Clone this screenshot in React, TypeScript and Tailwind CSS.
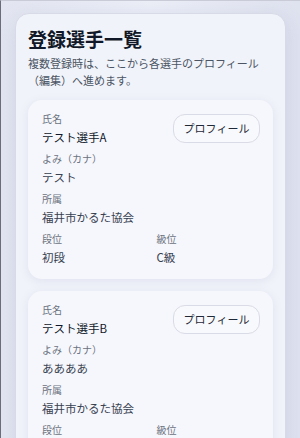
import React from "react";

interface Player {
  name: string;
  kana: string;
  club: string;
  dan: string;
  kyu: string;
}

const players: Player[] = [
  { name: "テスト選手A", kana: "テスト", club: "福井市かるた協会", dan: "初段", kyu: "C級" },
  { name: "テスト選手B", kana: "ああああ", club: "福井市かるた協会", dan: "初段", kyu: "C級" },
];

const Field: React.FC<{ label: string; value: string; strong?: boolean }> = ({
  label,
  value,
  strong,
}) => (
  <div>
    <div className="text-[10px] leading-[16px] text-[#6b7280]">{label}</div>
    <div
      className={
        strong
          ? "mt-[1px] text-[11.5px] leading-[18px] text-[#0f172a]"
          : "mt-[1px] text-[11.5px] leading-[18px] text-[#374151]"
      }
    >
      {value}
    </div>
  </div>
);

const PlayerCard: React.FC<{ player: Player }> = ({ player }) => (
  <div className="rounded-[14px] bg-[#f6f7fc] px-[14px] pt-[11px] pb-[13px] shadow-[0_2px_10px_rgba(120,130,170,0.14)]">
    <div className="flex flex-col gap-[5px]">
      <div className="flex items-start justify-between">
        <Field label="氏名" value={player.name} strong />
        <button
          type="button"
          className="mt-[3px] -mr-[1px] h-[29px] w-[87px] rounded-[12px] border border-[#d9dce6] bg-[#f8f9fc] text-[11px] text-[#1f2937]"
        >
          プロフィール
        </button>
      </div>
      <Field label="よみ（カナ）" value={player.kana} />
      <Field label="所属" value={player.club} />
      <div className="grid grid-cols-2 gap-x-3">
        <Field label="段位" value={player.dan} />
        <Field label="級位" value={player.kyu} />
      </div>
    </div>
  </div>
);

export default function App() {
  return (
    <div
      className="h-[438px] overflow-hidden border-l border-t border-l-[#6b6e78] border-t-[#c9ccd6] bg-gradient-to-r from-[#e3e6f1] via-[#eceff7] to-[#dfe2ef] px-[14px] pt-[12px]"
      style={{ fontFamily: '"Noto Sans CJK JP", "Noto Sans", sans-serif' }}
    >
      <div className="rounded-[14px] border border-[#d8dbe7] bg-[#f1f3fa] px-[12px] pt-[11px] pb-4 shadow-[0_4px_20px_rgba(110,120,170,0.18)]">
        <h1 className="text-[19px] leading-[28px] font-bold text-[#111827]">登録選手一覧</h1>
        <p className="mt-[2px] text-[11px] leading-[17px] text-[#4b5563]">
          複数登録時は、ここから各選手のプロフィール
          <br />
          （編集）へ進めます。
        </p>
        <div className="mt-[11px] flex flex-col gap-3">
          {players.map((p) => (
            <PlayerCard key={p.name} player={p} />
          ))}
        </div>
      </div>
    </div>
  );
}
